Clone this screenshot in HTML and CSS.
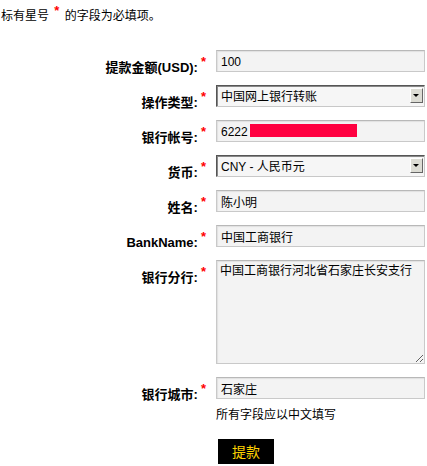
FILE: index.html
```html
<!DOCTYPE html>
<html lang="zh-CN">
<head>
  <meta charset="UTF-8" />
  <meta name="viewport" content="width=device-width, initial-scale=1.0"/>
  <title>提款</title>
  <link rel="stylesheet" href="styles.css">
</head>
<body>

  <p class="intro">标有星号 <span class="req">*</span> 的字段为必填项。</p>

  <form class="withdraw">
    <label class="lbl" for="amount">提款金额(USD):<span class="req">*</span></label>
    <input class="field" id="amount" type="text" value="100">

    <label class="lbl" for="type">操作类型:<span class="req">*</span></label>
    <div class="drop">
      <select class="field pick" id="type">
        <option>中国网上银行转账</option>
      </select>
      <span class="arrow"></span>
    </div>

    <label class="lbl" for="account">银行帐号:<span class="req">*</span></label>
    <div class="masked">
      <input class="field" id="account" type="text" value="6222">
      <span class="redact"></span>
    </div>

    <label class="lbl" for="currency">货币:<span class="req">*</span></label>
    <div class="drop">
      <select class="field pick" id="currency">
        <option>CNY - 人民币元</option>
      </select>
      <span class="arrow"></span>
    </div>

    <label class="lbl" for="name">姓名:<span class="req">*</span></label>
    <input class="field" id="name" type="text" value="陈小明">

    <label class="lbl" for="bank">BankName:<span class="req">*</span></label>
    <input class="field" id="bank" type="text" value="中国工商银行">

    <label class="lbl" for="branch">银行分行:<span class="req">*</span></label>
    <textarea class="field memo" id="branch">中国工商银行河北省石家庄长安支行</textarea>

    <label class="lbl" for="city">银行城市:<span class="req">*</span></label>
    <input class="field" id="city" type="text" value="石家庄">

    <span></span>
    <div class="foot">
      <p class="hint">所有字段应以中文填写</p>
      <button class="submit" type="button">提款</button>
    </div>
  </form>

</body>
</html>
```

FILE: styles.css
```css
body {
  margin: 0;
  font-family: "Liberation Sans", "Noto Sans CJK SC", sans-serif;
  font-size: 12px;
  color: #000;
  background: #fff;
}
.intro {
  box-sizing: border-box;
  height: 22px;
  margin: 0;
  padding: 6px 0 0 1px;
  line-height: 16px;
}
.intro .req {
  vertical-align: 5px;
  margin: 0 2px;
}
.req {
  color: #f00;
  font-weight: bold;
  font-size: 13px;
  line-height: 10px;
  vertical-align: 6px;
  margin-left: 3px;
}
.withdraw {
  display: grid;
  grid-template-columns: 206px 209px;
  column-gap: 10px;
  row-gap: 13px;
  margin-top: 28px;
  align-items: start;
}
.lbl {
  box-sizing: border-box;
  height: 22px;
  text-align: right;
  font-weight: bold;
  font-size: 13px;
  line-height: 16px;
  padding-top: 7px;
  white-space: nowrap;
}
.field {
  box-sizing: border-box;
  width: 209px;
  height: 22px;
  margin: 0;
  padding: 1px 4px 0;
  border: 1px solid #c9c9c9;
  border-top-color: #b8b8b8;
  background: #f3f3f3;
  box-shadow: inset 1px 1px 1px #e0e0e0;
  font-family: "Liberation Sans", "Noto Sans CJK SC", sans-serif;
  font-size: 12px;
  color: #000;
  outline: none;
}
.drop {
  position: relative;
  width: 209px;
}
.pick {
  -webkit-appearance: none;
  appearance: none;
  border: 1px solid #555;
  border-right-color: #c8c8c8;
  border-bottom-color: #c8c8c8;
  box-shadow: inset 1px 1px 0 #888;
  background: #f6f6f6;
  padding-left: 4px;
}
.arrow {
  position: absolute;
  right: 2px;
  top: 3px;
  width: 13px;
  height: 15px;
  background: #dcdcd4;
  border: 1px solid #fff;
  border-right-color: #666;
  border-bottom-color: #666;
  box-sizing: border-box;
}
.arrow::after {
  content: "";
  position: absolute;
  left: 2px;
  top: 5px;
  border-left: 3px solid transparent;
  border-right: 3px solid transparent;
  border-top: 3px solid #000;
}
.masked {
  position: relative;
  width: 209px;
}
.redact {
  position: absolute;
  left: 34px;
  top: 4px;
  width: 107px;
  height: 13px;
  background: #ff0040;
}
.memo {
  height: 104px;
  padding: 3px 3px;
  resize: both;
  line-height: 14px;
}
.foot {
  margin-top: -5px;
}
.hint {
  margin: 0;
  height: 16px;
  line-height: 16px;
}
.submit {
  display: block;
  margin: 16px 0 0 2px;
  width: 56px;
  height: 25px;
  border: none;
  background: #000;
  color: #ffd200;
  font-family: "Noto Sans CJK SC", sans-serif;
  font-size: 14px;
  line-height: 25px;
  padding: 0;
  cursor: pointer;
}
```
